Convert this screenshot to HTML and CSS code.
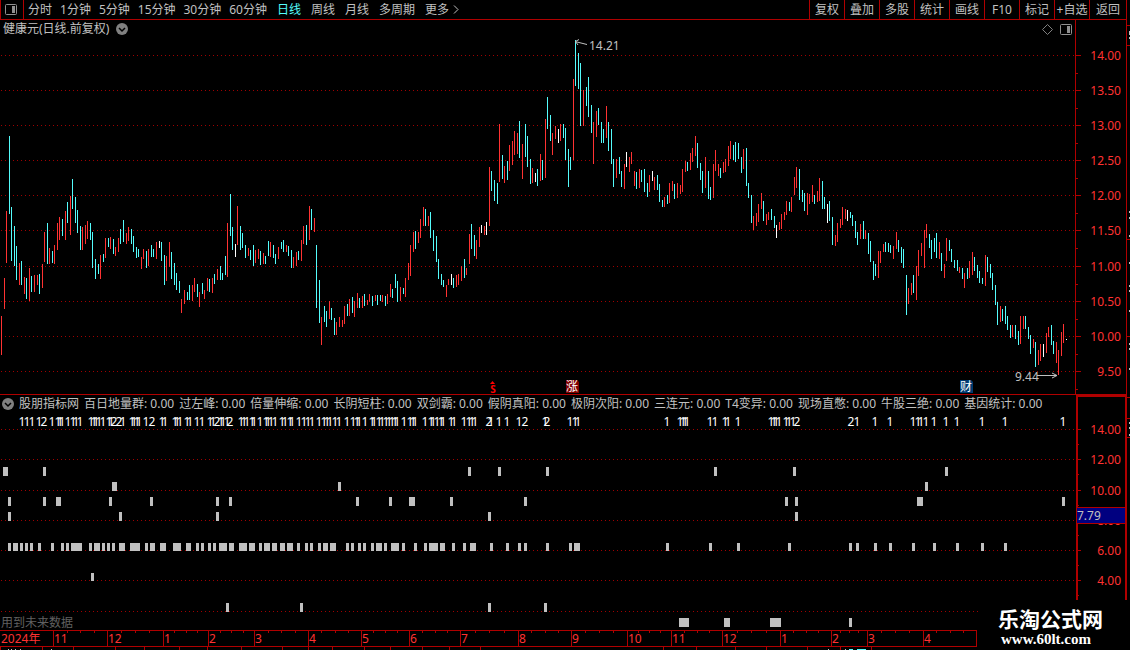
FILE: index.html
```
<!DOCTYPE html>
<html lang="zh-CN">
<head>
  <meta charset="UTF-8">
  <meta name="viewport" content="width=device-width, initial-scale=1.0">
  <title>健康元 日线</title>
  <link rel="stylesheet" href="styles.css">
</head>
<body>
  <div class="terminal">
    <div class="workspace">
      <header class="toolbar">
        <button class="layout-btn" type="button" aria-label="布局">
          <svg width="12" height="11" viewBox="0 0 12 11"><rect x="0.5" y="0.5" width="11" height="10" rx="1" fill="none" stroke="#909090"/><rect x="7" y="2" width="3" height="7" fill="#909090"/></svg>
        </button>
        <nav class="periods">
          <div class="minutes">
            <button type="button">分时</button>
            <button type="button">1分钟</button>
            <button type="button">5分钟</button>
            <button type="button">15分钟</button>
            <button type="button">30分钟</button>
            <button type="button">60分钟</button>
          </div>
          <button type="button" class="active">日线</button>
          <button type="button">周线</button>
          <button type="button">月线</button>
          <button type="button">多周期</button>
          <button type="button" class="more">更多
            <svg width="6" height="9" viewBox="0 0 6 9"><path d="M1 0.5L5 4.5L1 8.5" fill="none" stroke="#c0c0c0"/></svg>
          </button>
        </nav>
        <div class="tools">
          <button type="button">复权</button>
          <button type="button">叠加</button>
          <button type="button">多股</button>
          <button type="button">统计</button>
          <button type="button">画线</button>
          <button type="button">F10</button>
          <button type="button">标记</button>
          <button type="button">+自选</button>
          <button type="button" class="back">返回</button>
        </div>
      </header>

      <section class="price-pane">
        <div class="plot">
          <div class="pane-title">
            <span>健康元(日线.前复权)</span>
            <svg width="12" height="12" viewBox="0 0 12 12"><circle cx="6" cy="6" r="6" fill="#808080"/><path d="M3 5L6 8L9 5" fill="none" stroke="#000" stroke-width="1.5"/></svg>
            <div class="pane-icons">
              <svg width="11" height="11" viewBox="0 0 11 11"><path d="M5.5 0.5L10.5 5.5L5.5 10.5L0.5 5.5Z" fill="none" stroke="#808080"/></svg>
              <svg width="12" height="11" viewBox="0 0 12 11"><rect x="0.5" y="0.5" width="11" height="10" rx="1" fill="none" stroke="#909090"/><rect x="7" y="2" width="3" height="7" fill="#909090"/></svg>
            </div>
          </div>
          <svg class="price-chart" id="priceChart" viewBox="0 38 1075 356" preserveAspectRatio="none"></svg>
        </div>
        <svg class="price-axis" id="priceAxis" viewBox="1076 20 50 374"></svg>
      </section>

      <section class="indicator-pane">
        <div class="plot">
          <div class="legend">
            <svg width="12" height="12" viewBox="0 0 12 12"><circle cx="6" cy="6" r="6" fill="#808080"/><path d="M3 5L6 8L9 5" fill="none" stroke="#000" stroke-width="1.5"/></svg>
            <span>股朋指标网</span>
            <span>百日地量群: 0.00</span>
            <span>过左峰: 0.00</span>
            <span>倍量伸缩: 0.00</span>
            <span>长阴短柱: 0.00</span>
            <span>双剑霸: 0.00</span>
            <span>假阴真阳: 0.00</span>
            <span>极阴次阳: 0.00</span>
            <span>三连元: 0.00</span>
            <span>T4变异: 0.00</span>
            <span>现场直憋: 0.00</span>
            <span>牛股三绝: 0.00</span>
            <span>基因统计: 0.00</span>
          </div>
          <svg class="indicator-chart" id="indicatorChart" viewBox="0 412 1076 218" preserveAspectRatio="none"></svg>
        </div>
        <div class="indicator-axis">
          <svg id="indicatorAxis" viewBox="1078 397 47 233"></svg>
          <span class="cursor-value">7.79</span>
        </div>
      </section>

      <svg class="date-axis" id="dateAxis" viewBox="0 630 1126 20" preserveAspectRatio="none"></svg>
    </div>

    <svg class="side-strip" id="sideStrip" viewBox="1127 0 3 650"></svg>

    <div class="brand">
      <strong>乐淘公式网</strong>
      <span>www.60lt.com</span>
    </div>
  </div>
  <script src="script.js"></script>
</body>
</html>
```
FILE: styles.css
```
* {
  box-sizing: border-box;
  margin: 0;
  padding: 0;
}

body {
  background: #000;
  color: #c0c0c0;
  font-family: "Noto Sans", "Noto Sans CJK SC", sans-serif;
  font-size: 12px;
  line-height: 18px;
  overflow: hidden;
}

svg {
  display: block;
  flex: none;
}

button {
  background: none;
  border: none;
  color: inherit;
  font: inherit;
  white-space: nowrap;
  cursor: pointer;
}

.terminal {
  position: relative;
  display: grid;
  grid-template-columns: minmax(0, 1fr) 4px;
}

.workspace {
  min-width: 0;
}

/* top toolbar */
.toolbar {
  display: flex;
  height: 20px;
  border-bottom: 1px solid #b00000;
}

.layout-btn {
  width: 24px;
  padding-left: 4px;
  border-left: 1px solid #b00000;
  border-right: 1px solid #b00000;
}

.periods {
  display: flex;
  gap: 10px;
  padding-left: 4px;
}

.minutes {
  display: flex;
  gap: 8px;
}

.periods .active {
  color: #54fcfc;
}

.more {
  display: flex;
  align-items: center;
  gap: 4px;
}

.tools {
  display: flex;
  margin-left: auto;
}

.tools button {
  width: 35px;
  border-left: 1px solid #b00000;
}

.tools .back {
  width: 37px;
}

/* panes */
.price-pane,
.indicator-pane {
  display: grid;
  grid-template-columns: minmax(0, 1fr) 50px;
}

.price-pane {
  border-bottom: 1px solid #b00000;
}

.price-pane .plot {
  border-right: 1px solid #b00000;
}

.plot {
  min-width: 0;
}

.pane-title {
  display: flex;
  align-items: center;
  gap: 7px;
  height: 18px;
  padding: 0 3px;
}

.pane-icons {
  display: flex;
  gap: 7px;
  margin-left: auto;
}

.price-chart {
  width: 100%;
  height: 356px;
  overflow: visible;
}

.price-axis {
  width: 50px;
  height: 374px;
}

.legend {
  display: flex;
  align-items: center;
  gap: 5px;
  height: 17px;
  padding-left: 2px;
  white-space: nowrap;
  overflow: hidden;
}

.indicator-chart {
  width: 100%;
  height: 218px;
}

.indicator-axis {
  position: relative;
  border: 2px solid #b00000;
  border-right-width: 1px;
  border-bottom: none;
}

.indicator-axis svg {
  width: 100%;
  height: 233px;
}

.cursor-value {
  position: absolute;
  top: 110px;
  left: -1px;
  right: 0;
  height: 17px;
  background: #000080;
  border-top: 1px solid #b00000;
  border-bottom: 1px solid #b00000;
  line-height: 15px;
}

.date-axis {
  width: 100%;
  height: 20px;
}

.side-strip {
  width: 4px;
  height: 650px;
  border-left: 1px solid #b00000;
}

/* chart drawing */
svg text {
  font-size: 12px;
}

.bar-r { fill: #ff3232; }
.bar-c { fill: #54fcfc; }
.bar-w { fill: #fff; }
.block { fill: #c0c0c0; }
.tick { fill: #b00000; }
.axis-text { fill: #ff3232; }
.count { fill: #fff; text-anchor: middle; }
.note { fill: #c0c0c0; }
.hint { fill: #606060; }
.badge-text { fill: #fff; text-anchor: middle; }

svg .sell {
  fill: #ff0000;
  font-size: 10px;
  font-weight: bold;
  text-anchor: middle;
}

.grid-line {
  stroke: #a00000;
  stroke-dasharray: 1 3;
}

.arrow {
  fill: none;
  stroke: #c0c0c0;
}

/* site name in the corner */
.brand {
  position: absolute;
  right: 0;
  bottom: 0;
  width: 152px;
  height: 50px;
  padding: 7px 0 0 20px;
  background: #000;
  color: #fff;
}

.brand strong {
  display: block;
  font-size: 21px;
  line-height: 24px;
}

.brand span {
  display: block;
  padding-left: 3px;
  font-family: "Liberation Serif", serif;
  font-size: 15px;
  font-weight: bold;
  line-height: 16px;
}
```
FILE: script.js
```
// [x, high, low, colour] with r = up, c = down, w = flat
const bars = `
1 316 355 r,4 278 309 r,6 211 263 r,9 136 214 c,11 207 261 c,14 226 266 c,16 246 280 c,19 263 285 r,21 261 285 c,24 277 294 r,
26 278 299 c,29 268 301 r,31 276 292 c,34 275 292 r,37 275 285 r,39 274 294 c,42 264 288 r,44 232 262 r,47 223 264 c,49 248 264 r,
52 251 263 c,54 245 264 r,57 223 250 r,59 217 240 r,62 219 236 c,65 211 240 r,67 202 223 c,70 196 235 r,72 179 209 c,75 197 223 c,
77 210 233 c,80 226 250 c,82 227 250 r,85 225 244 r,87 221 239 r,90 223 240 c,92 232 268 c,95 259 279 c,98 264 274 c,100 255 279 r,
103 254 262 c,105 238 258 r,108 238 247 c,110 237 249 r,113 239 254 c,115 247 256 r,118 238 252 r,120 229 244 c,123 220 242 c,126 233 244 r,
128 227 241 r,131 229 244 c,133 236 252 c,136 247 258 c,138 249 257 c,141 257 269 r,143 249 259 r,146 251 268 c,148 249 266 r,151 245 257 c,
153 249 257 c,156 242 259 r,159 241 248 w,161 242 261 c,164 255 285 c,166 256 281 r,169 242 267 r,171 252 279 c,174 263 285 c,176 273 290 c,
179 281 293 c,181 299 313 r,184 290 304 r,187 292 300 c,189 285 300 c,192 285 301 r,194 278 292 r,197 284 297 c,199 292 307 r,202 283 294 c,
204 290 299 r,207 278 291 r,209 279 292 c,212 278 293 r,214 274 284 c,217 269 280 r,220 266 280 c,222 273 280 c,225 256 275 c,227 223 277 r,
230 194 236 c,232 227 250 c,235 244 257 w,237 206 245 r,240 226 250 c,242 233 248 c,245 245 258 c,248 248 256 r,250 250 260 c,253 245 266 c,
255 250 263 r,258 249 259 r,260 251 265 c,263 253 264 r,265 256 264 c,268 241 256 c,270 242 257 r,273 245 258 c,275 254 264 c,278 247 259 r,
281 242 249 c,283 240 252 c,286 245 252 r,288 246 256 c,291 250 268 c,293 257 268 r,296 252 266 r,298 251 260 c,301 240 261 r,303 226 244 r,
306 225 245 c,309 206 240 r,311 209 230 c,314 218 232 r,316 245 308 c,319 280 323 c,321 317 345 r,324 306 322 c,326 311 327 c,329 301 319 r,
331 308 320 c,334 318 335 c,336 322 335 r,339 317 327 r,342 320 327 r,344 306 324 r,347 304 316 c,349 299 316 r,352 297 313 c,354 301 317 r,
357 293 308 r,359 298 308 c,362 296 308 r,364 294 306 c,367 300 305 r,369 294 302 r,372 296 306 c,375 295 301 r,377 295 305 c,380 295 301 c,
382 295 302 r,385 296 306 c,387 294 304 r,390 284 297 r,392 289 298 c,395 274 288 c,397 281 302 c,400 287 301 r,403 288 294 c,405 278 297 r,
408 263 280 r,410 245 276 r,413 232 252 r,415 231 249 c,418 232 243 r,420 219 238 r,423 207 226 r,425 209 226 c,428 216 226 r,430 212 238 c,
433 230 251 c,436 236 262 c,438 259 279 c,441 274 285 c,443 280 287 c,446 285 297 r,448 279 285 r,451 274 285 w,453 278 288 c,456 275 287 r,
458 274 285 r,461 266 281 r,464 259 278 c,466 268 275 r,469 234 264 r,471 224 249 c,474 235 256 c,476 240 259 r,479 227 247 r,481 225 233 w,
484 226 235 r,486 222 235 w,489 167 226 r,491 171 191 c,494 180 201 c,497 183 204 c,499 124 182 r,502 155 179 c,504 166 183 r,507 161 180 c,
509 145 171 r,512 141 165 r,514 131 155 r,517 133 154 r,519 121 158 c,522 144 179 r,525 124 157 c,527 136 167 c,530 159 184 c,532 168 183 r,
535 173 182 w,537 169 186 c,540 154 181 r,542 160 180 c,545 119 178 r,547 97 129 c,550 115 141 c,552 133 155 r,555 126 139 r,558 129 143 w,
560 124 141 r,563 124 138 c,565 128 160 c,568 149 187 c,570 157 170 c,573 79 160 r,575 40 86 c,578 53 89 c,580 63 126 c,583 90 126 r,
586 87 106 c,588 77 117 c,591 105 133 c,593 122 164 r,596 111 137 r,598 108 125 c,601 122 143 c,603 129 143 c,606 106 138 r,608 122 151 c,
611 129 164 c,613 159 187 c,616 159 178 r,619 157 174 c,621 171 187 c,624 164 189 r,626 152 167 w,629 157 172 r,631 152 164 r,634 171 186 r,
636 172 189 c,639 169 188 r,641 170 182 c,644 169 192 c,647 183 197 c,649 175 192 r,652 171 181 w,654 177 190 r,657 175 190 c,659 184 202 c,
662 200 207 c,664 197 207 r,667 195 204 c,669 183 203 r,672 181 191 r,674 184 199 c,677 183 198 r,680 185 194 r,682 169 192 r,685 161 172 r,
687 162 171 c,690 153 170 r,692 148 162 r,695 136 156 r,697 143 168 c,700 163 180 c,702 171 193 c,705 157 188 r,708 171 199 c,710 187 200 c,
713 164 198 r,715 150 171 r,718 164 176 r,720 168 178 c,723 162 173 r,725 159 172 r,728 146 166 r,730 141 159 r,733 145 160 c,735 142 162 c,
738 143 159 c,741 157 173 c,743 149 169 r,746 148 186 c,748 183 198 c,751 195 223 c,753 216 230 r,756 213 226 r,758 204 222 r,761 193 209 r,
763 201 221 c,766 214 225 r,768 212 220 r,771 209 220 c,774 216 228 c,776 225 238 w,779 222 230 r,781 214 229 r,784 212 220 r,786 201 215 r,
789 202 211 c,791 197 212 r,794 177 195 r,796 167 188 r,799 169 200 c,802 190 202 c,804 193 211 c,807 193 215 r,809 194 204 r,812 185 202 r,
814 195 204 c,817 191 202 r,819 178 201 r,822 181 209 c,824 197 209 c,827 204 223 w,829 201 221 c,832 217 245 c,835 235 246 r,837 223 242 r,
840 219 228 r,842 207 225 r,845 209 219 r,847 210 221 w,850 212 218 c,852 215 226 c,855 221 238 c,857 232 245 c,860 224 239 r,863 221 239 c,
865 230 239 r,868 233 254 c,870 241 262 c,873 261 280 c,875 264 276 c,878 251 278 r,880 251 263 r,883 244 252 r,885 242 252 c,888 243 252 c,
890 245 253 c,893 246 259 r,896 232 249 r,898 240 252 c,901 247 263 c,903 249 268 c,906 275 315 c,908 288 304 r,911 283 295 r,913 275 293 c,
916 266 300 r,918 250 276 r,921 243 256 r,924 230 268 r,926 224 238 r,929 234 248 c,931 240 259 c,934 238 252 c,936 233 258 c,939 242 259 r,
941 253 271 c,944 264 278 r,946 238 261 r,949 240 251 c,951 249 262 c,954 260 268 c,957 260 271 c,959 267 273 r,962 268 279 c,964 273 288 r,
967 268 279 c,969 261 278 r,972 252 275 r,974 257 271 c,977 265 278 c,979 271 283 c,982 278 284 c,985 255 286 r,987 257 272 c,990 264 278 c,
992 273 290 c,995 285 305 c,997 302 325 c,1000 306 322 r,1002 309 321 c,1005 306 324 c,1007 316 330 c,1010 325 338 c,1012 325 337 r,1015 325 339 c,
1018 331 345 c,1020 316 344 r,1023 316 329 r,1025 316 329 c,1028 327 339 c,1030 335 354 c,1033 339 348 r,1035 342 367 c,1038 350 365 r,1040 344 361 r,
1043 344 357 w,1046 333 353 r,1048 327 337 r,1051 325 345 c,1053 341 354 c,1056 342 363 r,1058 350 375 r,1061 332 356 r,1063 324 343 r,1066 339 340 w`;

// signal rows: y, height, then x or x:width
const signals = [
  [467, 9, "3:5 43 468 498 546 714 793 945"],
  [482, 9, "112:5 338 925"],
  [497, 9, "8 43 56:5 109 150 216 229 356 389 409:6 450 524 785 795 917:6 1062"],
  [512, 9, "8 119 216 488 795"],
  [543, 8, "8 13:5 20 25 30 38 51 61 66 71:11 89 94:6 102 107 112 119:6 130:10 145 150:5 160:6 173:8 186:5 196 201 208 213 219:8 229:5 239:8 249:6 259 264:6 272:5 280:5 287:6 297 305 310 318 323:5 330:6 346 351 358 363 371 376:6 384 391:8 402 414 424 429:9 440:5 452 463 470:6 490 506 518 524 546 569 574:6 666 709 737 788 849 856 874 889 912 933 956 981 1004"],
  [573, 8, "91"],
  [603, 9, "226 300 488 544"],
  [618, 9, "679:10 724:6 770:11 849"]
];

const ones = "22 27 32 39 52 58 60 62 68 73 76 80 91 94 96 99 103 109 111 123 132 134 137 139 146 162 165 175 177 180 187 190 197 202 210 213 221 223 227 241 244 247 252 254 260 266 268 271 275 282 285 290 292 299 304 308 312 319 324 327 330 335 339 347 353 357 359 365 372 374 379 382 386 389 392 395 397 404 410 413 415 425 431 433 437 441 443 451 454 464 469 472 475 491 499 507 519 545 570 575 578 667 680 683 685 687 710 715 725 728 738 771 774 776 779 786 789 793 857 875 890 913 918 921 926 934 946 957 982 1005 1063";
const twos = "44 114 119 152 217 230 489 525 547 797 851";

const rect = (x, y, w, h, cls) => `<rect class="${cls}" x="${x}" y="${y}" width="${w}" height="${h}"/>`;
const text = (x, y, s, cls) => `<text class="${cls}" x="${x}" y="${y}">${s}</text>`;
const gridLine = y => `<line class="grid-line" x1="1" x2="1075" y1="${y + 0.5}" y2="${y + 0.5}"/>`;
const fill = (id, html) => { document.getElementById(id).innerHTML = html; };

// price chart
const priceGrid = [55, 90, 125, 160, 195, 230, 266, 301, 336, 371];
let out = priceGrid.map(gridLine).join("");
bars.split(",").forEach(b => {
  const [x, top, bottom, kind] = b.trim().split(" ");
  out += rect(x, top, 1, bottom - top, "bar-" + kind);
});
out += `<path class="arrow" d="M575 41.5L587 44.5M579 39.5L575.5 41.5L578 45"/>`;
out += text(589, 50, "14.21", "note");
out += text(1015, 381, "9.44", "note");
out += `<path class="arrow" d="M1037 375.5H1057M1052 373L1057 375.5L1052 378"/>`;
out += `<path fill="#f00" d="M490 384L492.5 381L495 384Z"/>` + text(493, 393, "S", "sell");
out += `<path fill="#800000" d="M566 380H577L579 382V393H566Z"/>` + text(572, 391, "涨", "badge-text");
out += `<path fill="#003a70" d="M960 380H971L973 382V393H960Z"/>` + text(966, 391, "财", "badge-text");
fill("priceChart", out);

out = "";
priceGrid.forEach((y, i) => {
  out += rect(1076, y, 5, 1, "tick") + rect(1076, y + 18, 2, 1, "tick");
  out += `<text class="axis-text" x="1121" y="${y + 5}" text-anchor="end">${(14 - i * 0.5).toFixed(2)}</text>`;
});
fill("priceAxis", out);

// indicator chart
const indicatorGrid = [429, 459, 490, 520, 550, 580, 611];
out = indicatorGrid.map(gridLine).join("");
ones.split(" ").forEach(x => { out += text(x, 426, "1", "count"); });
twos.split(" ").forEach(x => { out += text(x, 426, "2", "count"); });
signals.forEach(([y, h, items]) => {
  items.split(" ").forEach(item => {
    const [x, w] = item.split(":");
    out += rect(x, y, w || 3, h, "block");
  });
});
out += text(1, 627, "用到未来数据", "hint");
fill("indicatorChart", out);

out = "";
indicatorGrid.slice(0, 6).forEach((y, i) => {
  out += rect(1078, y, 3, 1, "tick") + rect(1078, y + 15, 1, 1, "tick");
  out += `<text class="axis-text" x="1121" y="${y + 5}" text-anchor="end">${(14 - i * 2).toFixed(2)}</text>`;
});
fill("indicatorAxis", out);

// date axis
const months = [[0, "2024年"], [53, "11"], [107, "12"], [163, "1"], [208, "2"], [254, "3"], [308, "4"], [361, "5"], [409, "6"], [460, "7"], [518, "8"], [571, "9"], [627, "10"], [671, "11"], [722, "12"], [780, "1"], [831, "2"], [867, "3"], [923, "4"], [976, ""]];
out = rect(0, 630, 977, 1, "tick") + rect(0, 646, 977, 1, "tick");
months.forEach(([x, label], i) => {
  if (i) out += rect(x, 630, 1, 16, "tick");
  out += text(x + 1, 643, label, "axis-text");
  if (i && months[i + 1]) {
    const step = (months[i + 1][0] - x) / 4;
    for (let k = 1; k < 4; k++) out += rect(Math.round(x + step * k), 631, 1, 2, "tick");
  }
});
[0, 42, 73, 115, 144, 179, 207, 241, 282, 308, 332, 364, 390, 422, 449, 480, 663, 696, 735, 766, 807, 840, 871].forEach(x => {
  out += rect(x, 647, 1, 3, "tick");
});
[8, 11, 15, 20, 51, 828, 845].forEach(x => { out += rect(x, 649, 1, 1, "block"); });
out += rect(849, 649, 4, 1, "bar-c") + rect(857, 649, 9, 1, "bar-c");
fill("dateAxis", out);

// edge of the neighbouring panel
out = [25, 45, 239, 336, 397, 418, 437].map(y => rect(1127, y, 3, 1, "tick")).join("");
[31, 33, 37, 211, 217, 235, 262, 285, 290, 310, 343, 348, 368, 422, 427, 434].forEach(y => {
  out += rect(1129, y, 1, 2, "block");
});
fill("sideStrip", out);
```
